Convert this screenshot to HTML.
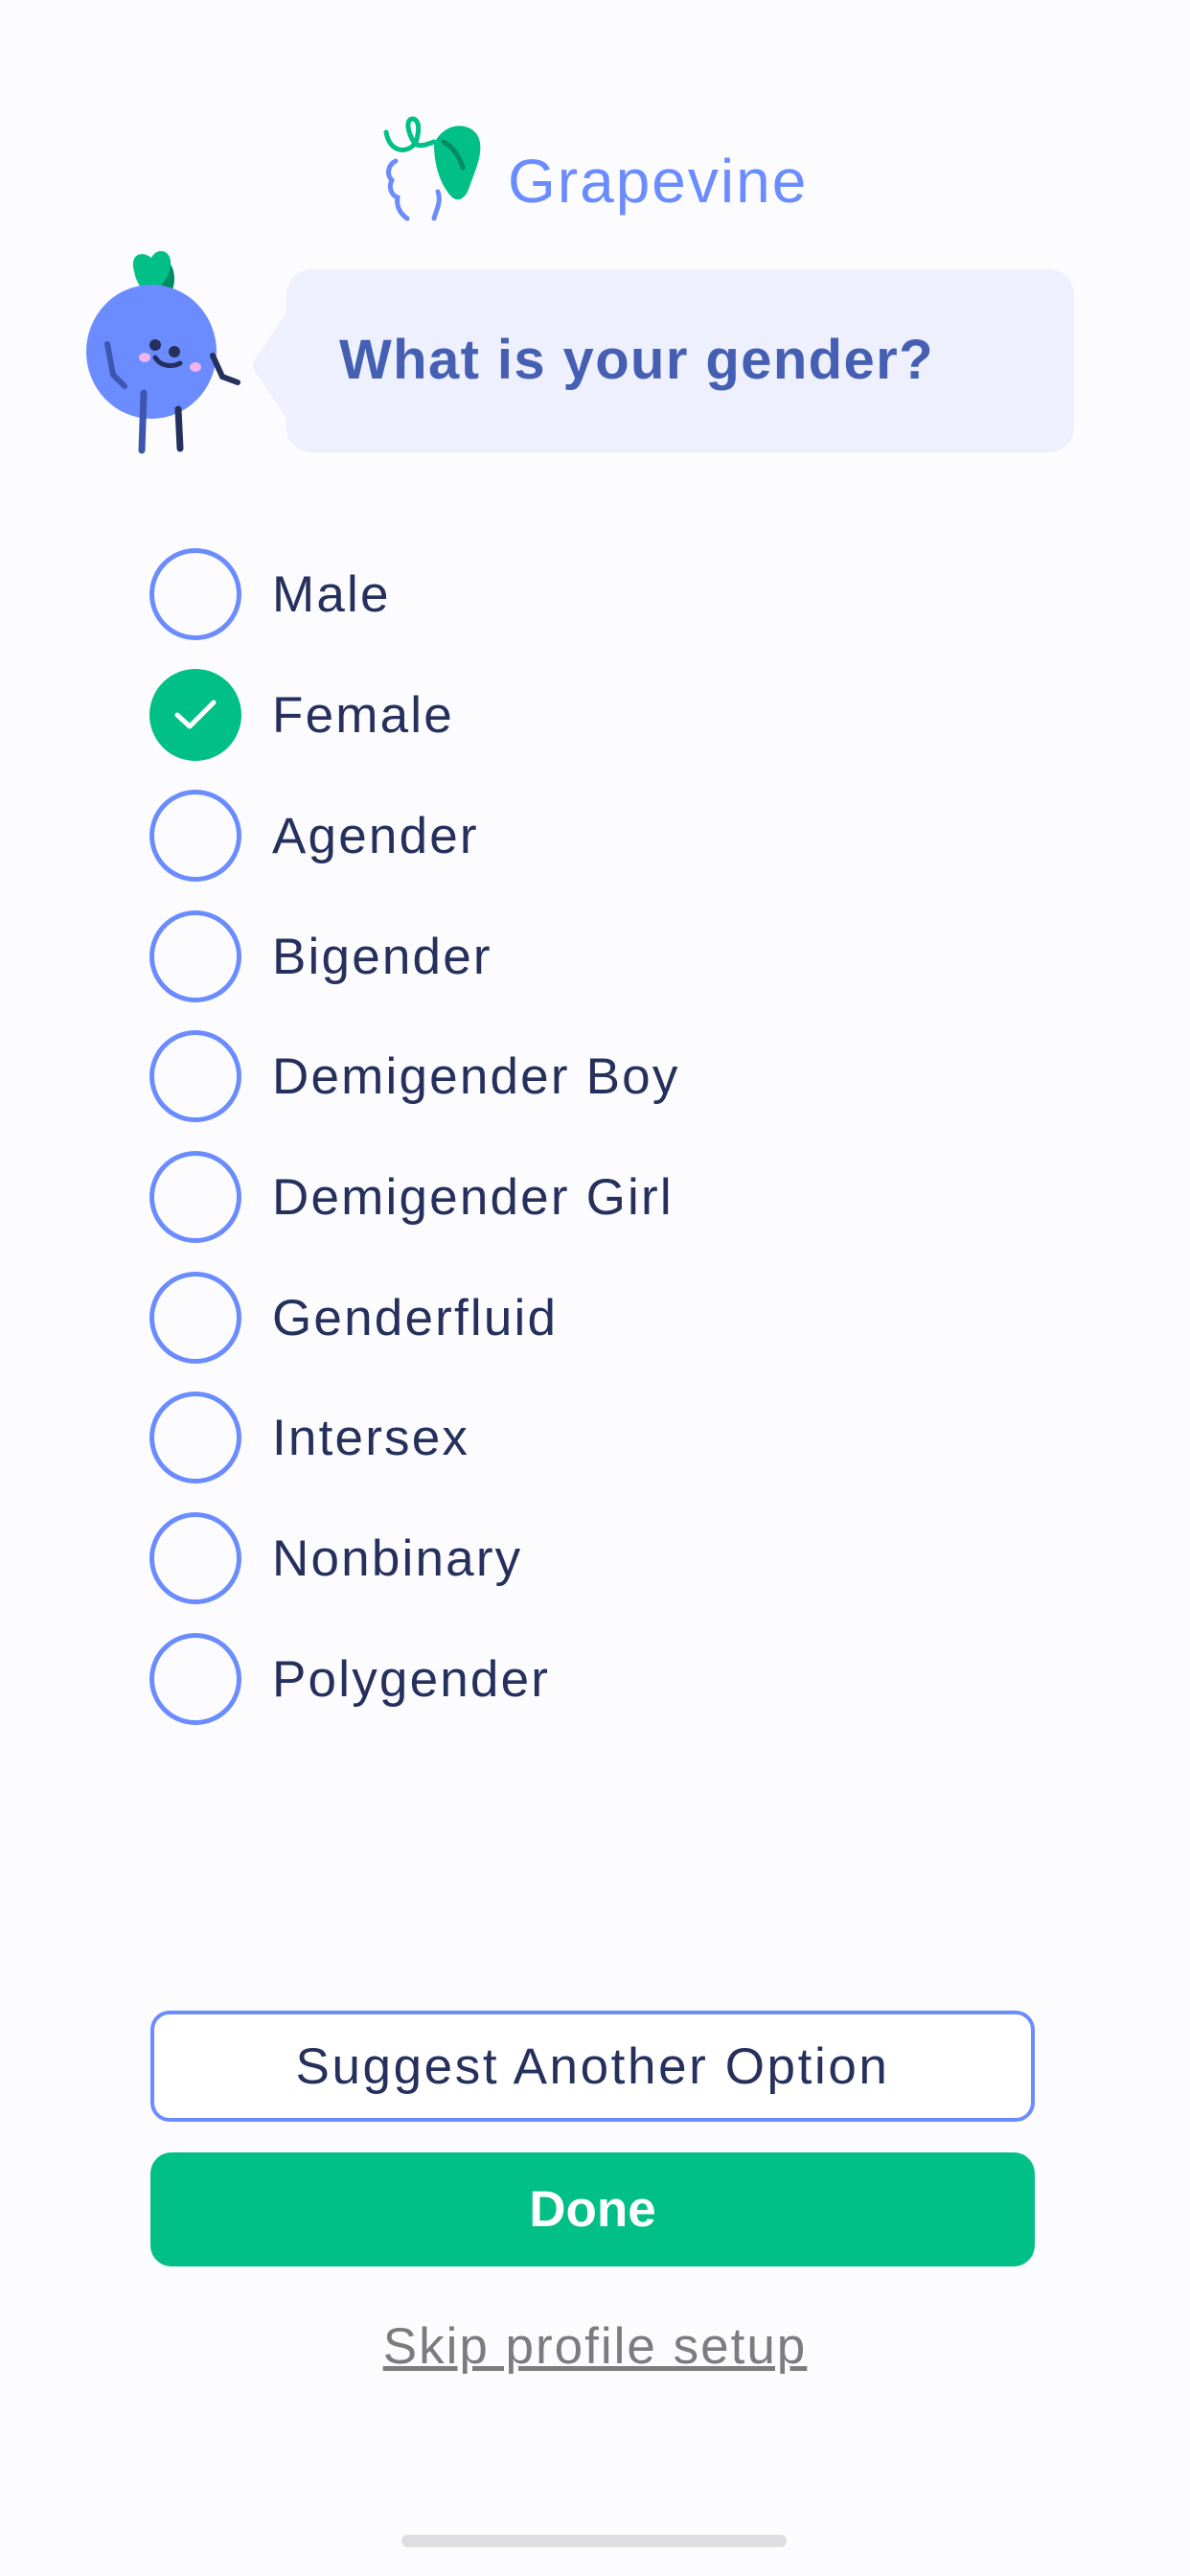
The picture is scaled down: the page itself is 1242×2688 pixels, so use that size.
<!DOCTYPE html>
<html><head><meta charset="utf-8"><style>
body{margin:0;width:1242px;height:2688px;background:#fcfcfe;font-family:"Liberation Sans",sans-serif;position:relative;overflow:hidden}
.abs{position:absolute}
.row{position:absolute;left:156px;height:96px;display:flex;align-items:center}
.c{width:96px;height:96px;border:5px solid #6b8cff;border-radius:50%;box-sizing:border-box;flex:none}
.row span{margin-left:32px;font-size:53px;letter-spacing:2.2px;color:#25305c}
</style></head><body>
<svg class="abs" style="left:395px;top:120px" width="125" height="115" viewBox="0 0 125 115">
<path d="M8 18 C12 40 30 40 38 30 C30 18 28 4 36 4 C46 6 40 28 38 30 C44 34 52 30 58 28" fill="none" stroke="#00bf87" stroke-width="5" stroke-linecap="round"/>
<path d="M58 30 C70 4 100 8 105 25 C110 40 100 60 95 75 C90 90 80 93 72 80 C62 66 58 48 58 30Z" fill="#00bf87"/>
<path d="M68 28 C78 34 84 42 88 55" fill="none" stroke="#008a60" stroke-width="5" stroke-linecap="round"/>
<path d="M18 48 C10 52 8 62 14 68 C10 76 14 84 20 86 C18 96 24 104 30 108" fill="none" stroke="#6b8cff" stroke-width="5" stroke-linecap="round"/>
<path d="M62 80 C66 90 60 100 58 108" fill="none" stroke="#6b8cff" stroke-width="5" stroke-linecap="round"/>
</svg>
<div class="abs" style="left:530px;top:152px;font-size:64px;letter-spacing:2px;color:#6b8cff">Grapevine</div>
<svg class="abs" style="left:80px;top:255px" width="180" height="230" viewBox="0 0 180 230">
<ellipse cx="88" cy="36" rx="14" ry="22" fill="#008a60"/>
<path d="M60 28 C55 10 68 6 78 14 C84 2 100 6 98 22 C96 40 80 52 76 52 C68 48 62 40 60 28Z" fill="#00bf87"/>
<ellipse cx="78" cy="112" rx="68" ry="70" fill="#6b8cff"/>
<path d="M32 104 L38 136 L50 148" fill="none" stroke="#3e56b0" stroke-width="6" stroke-linecap="round"/>
<path d="M142 116 L152 138 L168 144" fill="none" stroke="#25305c" stroke-width="6" stroke-linecap="round"/>
<circle cx="82" cy="105" r="6" fill="#25305c"/><circle cx="102" cy="112" r="6" fill="#25305c"/>
<path d="M82 118 C88 128 100 128 108 124" fill="none" stroke="#25305c" stroke-width="5" stroke-linecap="round"/>
<ellipse cx="71" cy="118" rx="6" ry="5" fill="#f1b4f0"/><ellipse cx="124" cy="128" rx="6" ry="5" fill="#f1b4f0"/>
<path d="M70 155 L68 215" stroke="#3e56b0" stroke-width="7" stroke-linecap="round"/>
<path d="M106 172 L108 213" stroke="#25305c" stroke-width="7" stroke-linecap="round"/>
</svg>
<svg class="abs" style="left:262px;top:281px" width="40" height="192"><path d="M40 40 L8 88 C0 98 0 102 8 112 L40 160Z" fill="#eff0fd"/></svg>
<div class="abs" style="left:299px;top:281px;width:822px;height:191px;background:#eff0fd;border-radius:26px"></div>
<div class="abs" style="left:354px;top:342px;font-size:58px;letter-spacing:1.4px;font-weight:bold;color:#4560b3">What is your gender?</div>

<div class="row" style="top:572px"><div class="c"></div><span>Male</span></div>
<div class="row" style="top:698px"><div class="c" style="background:#00bf87;border-color:#00bf87;display:flex;align-items:center;justify-content:center"><svg width="50" height="40" viewBox="0 0 50 40"><path d="M6 20 L19 32 L44 7" fill="none" stroke="#fff" stroke-width="5" stroke-linecap="round" stroke-linejoin="round"/></svg></div><span>Female</span></div>
<div class="row" style="top:824px"><div class="c"></div><span>Agender</span></div>
<div class="row" style="top:950px"><div class="c"></div><span>Bigender</span></div>
<div class="row" style="top:1075px"><div class="c"></div><span>Demigender Boy</span></div>
<div class="row" style="top:1201px"><div class="c"></div><span>Demigender Girl</span></div>
<div class="row" style="top:1327px"><div class="c"></div><span>Genderfluid</span></div>
<div class="row" style="top:1452px"><div class="c"></div><span>Intersex</span></div>
<div class="row" style="top:1578px"><div class="c"></div><span>Nonbinary</span></div>
<div class="row" style="top:1704px"><div class="c"></div><span>Polygender</span></div>

<div class="abs" style="left:157px;top:2098px;width:923px;height:116px;box-sizing:border-box;border:4px solid #6b8cff;border-radius:20px;background:#fff;display:flex;align-items:center;justify-content:center;font-size:53px;letter-spacing:2.6px;color:#25305c">Suggest Another Option</div>
<div class="abs" style="left:157px;top:2246px;width:923px;height:119px;border-radius:22px;background:#00bf87;display:flex;align-items:center;justify-content:center;font-size:53px;font-weight:bold;color:#fff">Done</div>
<div class="abs" style="left:0;width:1242px;top:2418px;text-align:center;font-size:53px;letter-spacing:2px;color:#7b7b80;text-decoration:underline">Skip profile setup</div>
<div class="abs" style="left:419px;top:2645px;width:402px;height:13px;border-radius:7px;background:#dedee0"></div>
</body></html>
